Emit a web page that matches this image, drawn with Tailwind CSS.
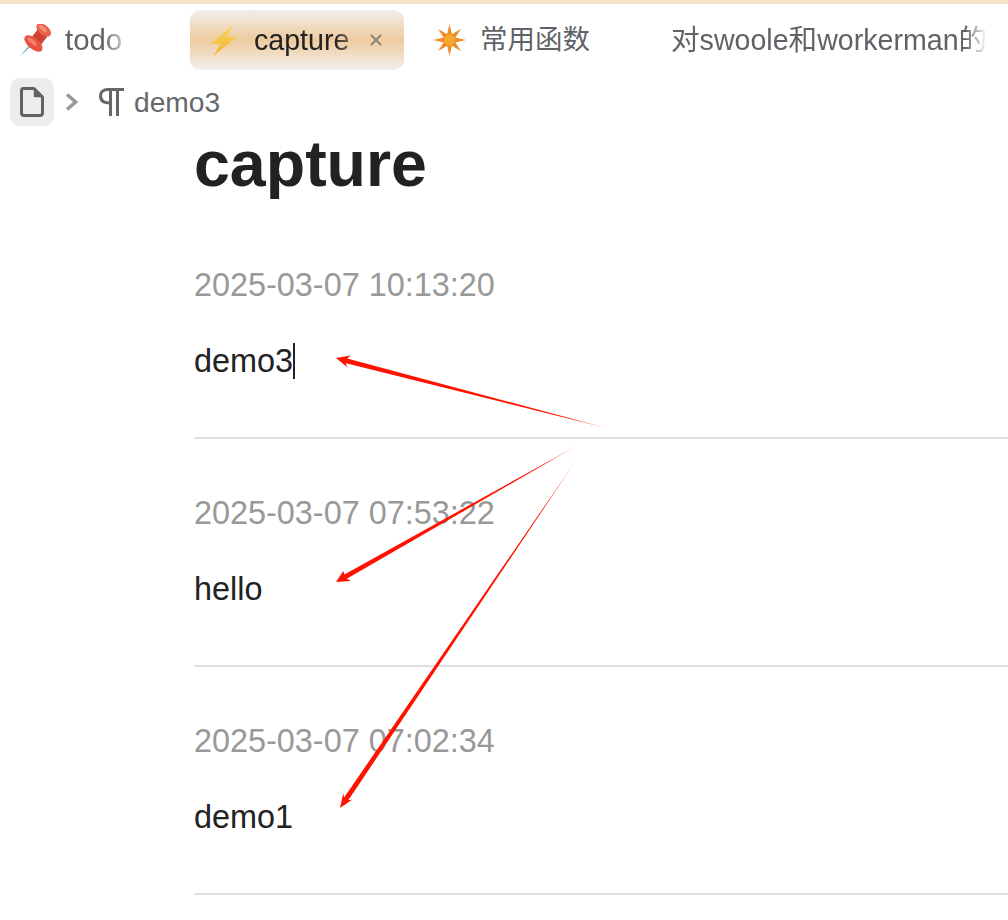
<!DOCTYPE html>
<html lang="en">
<head>
  <meta charset="UTF-8" />
  <title>capture</title>
  <script src="https://cdn.jsdelivr.net/npm/@tailwindcss/browser@4"></script>
</head>
<body class="relative h-[920px] w-[1008px] overflow-hidden bg-white font-['Liberation_Sans','Noto_Sans_CJK_SC',sans-serif]">
  <div class="h-1 bg-[#f6e2c4]"></div>

  <!-- Tabs -->
  <div class="mt-1.5 flex h-[60px] gap-[11px] pl-2.5 text-[28.6px] text-[#5f6368]">
    <div class="flex w-[169px] items-center pl-2.5">
      <svg class="h-8 w-8 shrink-0" viewBox="0 0 32 32">
        <path d="M0 32 L9.5 20.5 L11.5 22.5 Z" fill="#8fb8cc" />
        <path d="M18 5 L27 13 L20 22 L11 14 Z" fill="#c9432f" />
        <ellipse cx="13.5" cy="19.5" rx="11" ry="5.5" transform="rotate(40 13.5 19.5)" fill="#e8543f" />
        <ellipse cx="12" cy="17.5" rx="6" ry="2" transform="rotate(40 12 17.5)" fill="#f0816c" />
        <ellipse cx="23.7" cy="6" rx="8.5" ry="5" transform="rotate(40 23.7 6)" fill="#ea5f49" />
        <ellipse cx="23" cy="4.5" rx="5" ry="2" transform="rotate(40 23 4.5)" fill="#f3907c" />
      </svg>
      <span class="ml-[13px] text-[29.4px] [mask-image:linear-gradient(to_right,black_65%,rgba(0,0,0,0.4)_100%)]">todo</span>
    </div>
    <div class="flex w-[214px] items-center rounded-[10px] bg-gradient-to-b from-[#f2eeeb] via-[#eecb9f] to-[#f2eeeb] pl-[18px] text-[#222222]">
      <svg class="h-8 w-8 shrink-0" viewBox="0 0 32 32">
        <defs>
          <linearGradient id="bolt" x1="0" y1="0" x2="0" y2="1">
            <stop offset="0" stop-color="#f9d659" />
            <stop offset="1" stop-color="#f3b53a" />
          </linearGradient>
        </defs>
        <path d="M25.5 0.5 L2.5 20 L12.5 19.5 L5.5 32 L29.5 12.5 L18.5 13 Z" fill="url(#bolt)" />
      </svg>
      <span class="ml-3.5 [mask-image:linear-gradient(to_right,black_85%,rgba(0,0,0,0.6)_100%)]">capture</span>
      <svg class="ml-[21px] h-3 w-3" viewBox="0 0 12 12" fill="none" stroke="#85817b" stroke-width="1.8">
        <path d="M1 1 L11 11 M11 1 L1 11" />
      </svg>
    </div>
    <div class="flex w-[214px] items-center pl-[18px]">
      <svg class="h-8 w-[33px] shrink-0" viewBox="0 0 33 32">
        <path d="M16.5 0 L18.9 10.2 L28 5 L22.3 13.6 L33 16 L22.3 18.4 L28 27 L18.9 21.8 L16.5 32 L14.1 21.8 L5 27 L10.7 18.4 L0 16 L10.7 13.6 L5 5 L14.1 10.2 Z" fill="#f08a24" />
        <circle cx="16.5" cy="16" r="5.5" fill="#f5a734" />
      </svg>
      <span class="ml-3.5 text-[27.5px]">常用函数</span>
    </div>
    <div class="flex w-[346px] shrink-0 items-center overflow-hidden pl-[31px]">
      <span class="whitespace-nowrap [mask-image:linear-gradient(to_right,black_93%,transparent_100%)]">对swoole和workerman的</span>
    </div>
  </div>

  <!-- Breadcrumb -->
  <div class="mt-2 flex h-12 items-center pl-2.5 text-[28.2px] text-[#65686c]">
    <div class="flex h-12 w-11 items-center justify-center rounded-[10px] bg-[#ececec]">
      <svg class="h-[30px] w-6" viewBox="0 0 24 30" fill="none" stroke="#5f6368" stroke-width="3" stroke-linejoin="round">
        <path d="M3.5 1.5 H14 L22.5 10 V26 Q22.5 28.5 20 28.5 H4 Q1.5 28.5 1.5 26 V3.5 Q1.5 1.5 3.5 1.5 Z" />
        <path d="M14.5 2 V9.5 H22 Z" fill="#5f6368" stroke-width="1.5" />
      </svg>
    </div>
    <svg class="ml-[11px] h-[18px] w-[13px]" viewBox="0 0 13 18" fill="none" stroke="#999999" stroke-width="3.5">
      <path d="M2 1.5 L10.5 9 L2 16.5" />
    </svg>
    <svg class="ml-[21px] h-7 w-[25px]" viewBox="0 0 25 28" fill="none" stroke="#666666" stroke-width="3">
      <path d="M25 1.5 H9 C4 1.5 1.5 4.5 1.5 8 C1.5 12 4.5 15 11.5 15" />
      <path d="M11.5 1.5 V28 M18.5 1.5 V28" />
    </svg>
    <span class="ml-2.5">demo3</span>
  </div>

  <!-- Document -->
  <main class="ml-[194px]">
    <h1 class="h-[76px] text-[64.5px] leading-[76px] font-bold text-[#222222]">capture</h1>
    <div class="mt-[9px] text-[32.4px] leading-[48px]">
      <section class="border-b-2 border-[#e0e0e0] pt-[50px] pb-[52px]">
        <p class="text-[#999999]">2025-03-07 10:13:20</p>
        <p class="mt-7 flex items-center text-[#222222]">demo3<span class="h-9 w-0.5 bg-[#222222]"></span></p>
      </section>
      <section class="border-b-2 border-[#e0e0e0] pt-[50px] pb-[52px]">
        <p class="text-[#999999]">2025-03-07 07:53:22</p>
        <p class="mt-7 text-[#222222]">hello</p>
      </section>
      <section class="border-b-2 border-[#e0e0e0] pt-[50px] pb-[52px]">
        <p class="text-[#999999]">2025-03-07 07:02:34</p>
        <p class="mt-7 text-[#222222]">demo1</p>
      </section>
    </div>
  </main>

  <!-- Annotation arrows -->
  <svg class="pointer-events-none absolute inset-0" width="1008" height="920" viewBox="0 0 1008 920">
    <defs>
      <linearGradient id="fade1" gradientUnits="userSpaceOnUse" x1="336" y1="358" x2="610" y2="429">
        <stop offset="0.85" stop-color="#ff1200" />
        <stop offset="1" stop-color="#ff1200" stop-opacity="0.25" />
      </linearGradient>
      <linearGradient id="fade2" gradientUnits="userSpaceOnUse" x1="336" y1="582" x2="578" y2="445">
        <stop offset="0.85" stop-color="#ff1200" />
        <stop offset="1" stop-color="#ff1200" stop-opacity="0.25" />
      </linearGradient>
      <linearGradient id="fade3" gradientUnits="userSpaceOnUse" x1="340" y1="808" x2="579" y2="456">
        <stop offset="0.85" stop-color="#ff1200" />
        <stop offset="1" stop-color="#ff1200" stop-opacity="0.25" />
      </linearGradient>
    </defs>
    <polygon fill="url(#fade1)" points="336,358 350.8,355.5 347.2,358.4 610,429 346,363.2 347,367" />
    <polygon fill="url(#fade2)" points="336,582 350.9,581 346.8,578.8 578,445 344.4,574.4 343.3,571" />
    <polygon fill="url(#fade3)" points="340,808 352.4,799.5 348.3,800.3 579,456 344.1,797.5 343.3,793.3" />
  </svg>
</body>
</html>
